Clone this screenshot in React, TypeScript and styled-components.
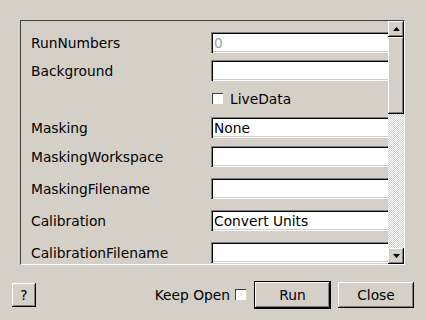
import React from 'react';
import styled, { createGlobalStyle } from 'styled-components';

const GlobalStyle = createGlobalStyle`
  html, body {
    margin: 0;
    padding: 0;
    background: #d4d0c8;
    font-family: 'DejaVu Sans', 'Liberation Sans', sans-serif;
    font-size: 13.8px;
    color: #000;
  }
`;

const Dialog = styled.div`
  width: 426px;
  height: 320px;
  box-sizing: border-box;
  padding: 20px 21px 0 20px;
  display: flex;
  flex-direction: column;
`;

const Frame = styled.div`
  height: 245px;
  box-sizing: border-box;
  border-top: 1px solid #404040;
  border-left: 1px solid #404040;
  border-right: 1px solid #fff;
  border-bottom: 1px solid #fff;
  display: flex;
  overflow: hidden;
`;

const Viewport = styled.div`
  flex: 1;
  overflow: hidden;
  padding: 11px 0 0 10px;
`;

const Row = styled.div<{ $h: number }>`
  display: grid;
  grid-template-columns: 180px 200px;
  align-items: start;
  height: ${(p) => p.$h}px;
`;

const Label = styled.div`
  height: 21px;
  box-sizing: border-box;
  padding-top: 1px;
  line-height: 21px;
  white-space: nowrap;
`;

const Field = styled.div<{ $muted?: boolean }>`
  height: 21px;
  box-sizing: border-box;
  background: #fff;
  padding: 2px 3px 0;
  line-height: 19px;
  color: ${(p) => (p.$muted ? '#a0a0a0' : '#000')};
  box-shadow: inset 1px 1px #808080, inset 2px 2px #000, inset -1px -1px #fff,
    inset -2px -2px #d4d0c8;
  white-space: nowrap;
`;

const CheckLine = styled.label`
  display: flex;
  align-items: center;
  gap: 6px;
  height: 21px;
  padding-left: 1px;
`;

const Box = styled.span`
  width: 12px;
  height: 12px;
  box-sizing: border-box;
  background: #fff;
  box-shadow: inset 1px 1px #404040, inset -1px -1px #fff;
  border-right: 1px solid #d4d0c8;
  border-bottom: 1px solid #d4d0c8;
  display: inline-block;
`;

const ScrollBar = styled.div`
  width: 16px;
  display: flex;
  flex-direction: column;
  background: repeating-conic-gradient(#fff 0 25%, #d4d0c8 0 50%) 0 0 / 2px 2px;
`;

const raised = `
  background: #d4d0c8;
  box-shadow: inset -1px -1px #000, inset 1px 1px #fff, inset -2px -2px #808080,
    inset 2px 2px #d4d0c8;
`;

const ArrowButton = styled.div`
  ${raised}
  height: 16px;
  display: flex;
  align-items: center;
  justify-content: center;
`;

const Thumb = styled.div`
  ${raised}
  height: 77px;
`;

const Track = styled.div`
  flex: 1;
`;

const Footer = styled.div`
  display: flex;
  align-items: center;
  height: 30px;
  margin-top: 15px;
  margin-left: -8px;
  margin-right: -9px;
`;

const Button = styled.button<{ $w: number; $default?: boolean }>`
  ${raised}
  border: none;
  font: inherit;
  color: #000;
  width: ${(p) => p.$w}px;
  height: 26px;
  padding: 0;
  ${(p) =>
    p.$default
      ? `outline: 1px solid #000; box-shadow: inset -1px -1px #000, inset 1px 1px #fff, inset -2px -2px #808080;`
      : ''}
`;

const HelpButton = styled(Button)`
  height: 24px;
`;

const Spacer = styled.div`
  flex: 1;
`;

const KeepOpen = styled.label`
  display: flex;
  align-items: center;
  gap: 5px;
  margin-right: 8px;
`;

const Actions = styled.div`
  display: flex;
  gap: 8px;
  align-items: center;
`;

const rows: { label: string; value?: string; muted?: boolean; h: number }[] = [
  { label: 'RunNumbers', value: '0', muted: true, h: 28 },
  { label: 'Background', h: 28 },
];

const rows2: { label: string; value?: string; h: number }[] = [
  { label: 'Masking', value: 'None', h: 29 },
  { label: 'MaskingWorkspace', h: 32 },
  { label: 'MaskingFilename', h: 32 },
  { label: 'Calibration', value: 'Convert Units', h: 32 },
  { label: 'CalibrationFilename', h: 32 },
];

const Triangle: React.FC<{ down?: boolean }> = ({ down }) => (
  <svg width="7" height="4" viewBox="0 0 7 4">
    <path d={down ? 'M0 0h7L3.5 4z' : 'M3.5 0L7 4H0z'} fill="#000" />
  </svg>
);

const App: React.FC = () => {
  return (
    <>
      <GlobalStyle />
      <Dialog>
        <Frame>
          <Viewport>
            {rows.map((r) => (
              <Row key={r.label} $h={r.h}>
                <Label>{r.label}</Label>
                <Field $muted={r.muted}>{r.value}</Field>
              </Row>
            ))}
            <Row $h={29}>
              <Label />
              <CheckLine>
                <Box />
                LiveData
              </CheckLine>
            </Row>
            {rows2.map((r) => (
              <Row key={r.label} $h={r.h}>
                <Label>{r.label}</Label>
                <Field>{r.value}</Field>
              </Row>
            ))}
          </Viewport>
          <ScrollBar>
            <ArrowButton>
              <Triangle />
            </ArrowButton>
            <Thumb />
            <Track />
            <ArrowButton>
              <Triangle down />
            </ArrowButton>
          </ScrollBar>
        </Frame>
        <Footer>
          <HelpButton $w={24}>?</HelpButton>
          <Spacer />
          <KeepOpen>
            Keep Open
            <Box />
          </KeepOpen>
          <Actions>
            <Button $w={75} $default>
              Run
            </Button>
            <Button $w={76}>Close</Button>
          </Actions>
        </Footer>
      </Dialog>
    </>
  );
};

export default App;
